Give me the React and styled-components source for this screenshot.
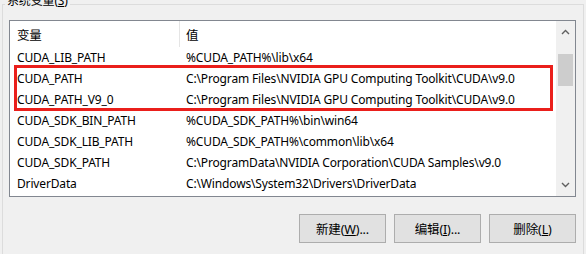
import styled, { createGlobalStyle } from 'styled-components';

const GlobalStyle = createGlobalStyle`
    body {
        margin: 0;
        background: #f0f0f0;
        font-family: "Noto Sans", "Noto Sans CJK SC", sans-serif;
        font-size: 12px;
        letter-spacing: -0.15px;
        color: #000;
    }
`;

const Page = styled.div`
    width: 586px;
    height: 254px;
    overflow: hidden;
    background: #f0f0f0;
`;

const Group = styled.div`
    position: relative;
    margin: 4px 2px 0 2px;
    height: 260px;
    border: 1px solid #dcdcdc;
    border-bottom: none;
    padding: 15px 0 0 6px;
    box-sizing: border-box;
`;

const Legend = styled.span`
    position: absolute;
    top: -12px;
    left: 2px;
    padding: 0 2px;
    background: #f0f0f0;
    line-height: 16px;
`;

const ListBox = styled.div`
    position: relative;
    width: 567px;
    height: 177px;
    box-sizing: border-box;
    border: 1px solid #828790;
    background: #fff;
    display: flex;
`;

const Content = styled.div`
    position: relative;
    flex: 1;
    display: flex;
    flex-direction: column;
`;

const Header = styled.div`
    display: flex;
    height: 26px;
    align-items: center;
`;

const HeadCell = styled.div`
    width: ${p => p.$w || 'auto'};
    flex: ${p => (p.$w ? 'none' : 1)};
    height: 100%;
    display: flex;
    align-items: center;
    padding-left: ${p => p.$pad}px;
    box-sizing: border-box;
    font-size: 12.5px;
    border-right: ${p => (p.$sep ? '1px solid #e5e5e5' : 'none')};
`;

const Row = styled.div`
    display: flex;
    height: 21px;
    align-items: center;
    white-space: nowrap;
`;

const Name = styled.div`
    width: 170px;
    padding-left: 7px;
    box-sizing: border-box;
`;

const Value = styled.div`
    padding-left: 6px;
`;

// hand-drawn annotation over the two CUDA_PATH rows
const Highlight = styled.div`
    position: absolute;
    left: 4px;
    top: 44px;
    width: 539px;
    height: 46px;
    box-sizing: border-box;
    border: 3px solid #ea1f1b;
    pointer-events: none;
`;

const Scrollbar = styled.div`
    width: 19px;
    background: #f0f0f0;
    display: flex;
    flex-direction: column;
    align-items: center;
`;

const Arrow = styled.div`
    height: 22px;
    display: flex;
    align-items: center;
    justify-content: center;
`;

const Track = styled.div`
    flex: 1;
    width: 100%;
    padding: 11px 2px 0;
    box-sizing: border-box;
`;

const Thumb = styled.div`
    height: 32px;
    background: #cdcdcd;
`;

const Buttons = styled.div`
    display: flex;
    justify-content: flex-end;
    gap: 8px;
    width: 567px;
    margin-top: 17px;
`;

const Button = styled.button`
    width: 87px;
    height: 29px;
    background: #e1e1e1;
    border: 1px solid #adadad;
    font-family: inherit;
    font-size: 12.5px;
    letter-spacing: inherit;
    color: #000;
    padding: 0;
    u {
        text-decoration: underline;
    }
`;

const rows = [
    ['CUDA_LIB_PATH', '%CUDA_PATH%\\lib\\x64'],
    ['CUDA_PATH', 'C:\\Program Files\\NVIDIA GPU Computing Toolkit\\CUDA\\v9.0'],
    ['CUDA_PATH_V9_0', 'C:\\Program Files\\NVIDIA GPU Computing Toolkit\\CUDA\\v9.0'],
    ['CUDA_SDK_BIN_PATH', '%CUDA_SDK_PATH%\\bin\\win64'],
    ['CUDA_SDK_LIB_PATH', '%CUDA_SDK_PATH%\\common\\lib\\x64'],
    ['CUDA_SDK_PATH', 'C:\\ProgramData\\NVIDIA Corporation\\CUDA Samples\\v9.0'],
    ['DriverData', 'C:\\Windows\\System32\\Drivers\\DriverData'],
];

function Chevron({ up }) {
    return (
        <svg width="9" height="6" viewBox="0 0 9 6">
            <path
                d={up ? 'M1 5 L4.5 1.5 L8 5' : 'M1 1 L4.5 4.5 L8 1'}
                fill="none"
                stroke="#606060"
                strokeWidth="1.4"
            />
        </svg>
    );
}

export default function App() {
    return (
        <Page>
            <GlobalStyle />
            <Group>
                <Legend>系统变量(<u>S</u>)</Legend>
                <ListBox>
                    <Content>
                        <Header>
                            <HeadCell $w="170px" $pad={7} $sep>变量</HeadCell>
                            <HeadCell $pad={6}>值</HeadCell>
                        </Header>
                        {rows.map(([name, value]) => (
                            <Row key={name}>
                                <Name>{name}</Name>
                                <Value>{value}</Value>
                            </Row>
                        ))}
                        <Highlight />
                    </Content>
                    <Scrollbar>
                        <Arrow><Chevron up /></Arrow>
                        <Track><Thumb /></Track>
                        <Arrow><Chevron /></Arrow>
                    </Scrollbar>
                </ListBox>
                <Buttons>
                    <Button>新建(<u>W</u>)...</Button>
                    <Button>编辑(<u>I</u>)...</Button>
                    <Button>删除(<u>L</u>)</Button>
                </Buttons>
            </Group>
        </Page>
    );
}
